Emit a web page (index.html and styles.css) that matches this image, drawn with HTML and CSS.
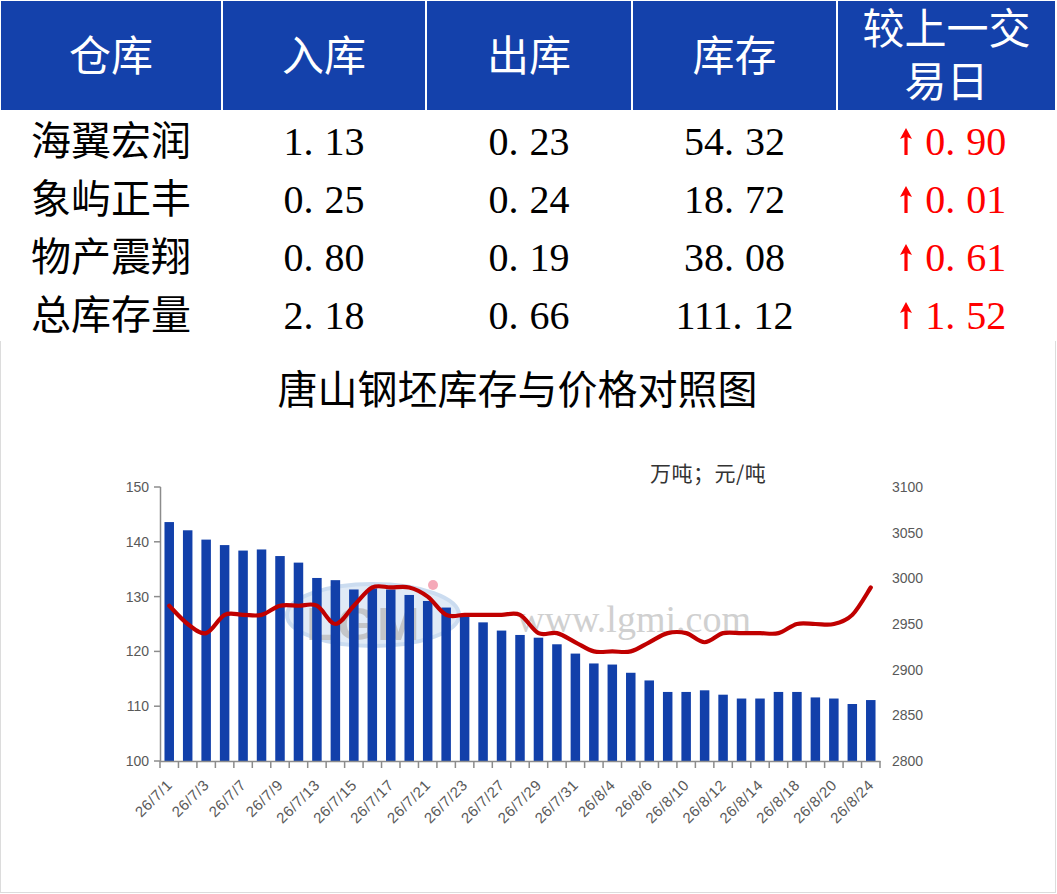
FILE: index.html
```html
<!DOCTYPE html>
<html lang="zh-CN">
<head>
<meta charset="utf-8">
<title>唐山钢坯库存</title>
<link rel="stylesheet" href="styles.css">
</head>
<body>
<div class="page">
  <div class="grid-row head">
    <div class="cell">仓库</div>
    <div class="cell">入库</div>
    <div class="cell">出库</div>
    <div class="cell">库存</div>
    <div class="cell">较上一交<br>易日</div>
  </div>
  <div class="tbody">
    <div class="grid-row brow">
      <div class="cell">海翼宏润</div>
      <div class="cell">1<span class="dot">.</span>13</div>
      <div class="cell">0<span class="dot">.</span>23</div>
      <div class="cell">54<span class="dot">.</span>32</div>
      <div class="cell chg"><svg class="arrow" width="12" height="27" viewBox="0 0 12 27"><path d="M6 0 L12 11 L7.6 9.2 L7.6 27 L4.4 27 L4.4 9.2 L0 11 Z"/></svg>0<span class="dot">.</span>90</div>
    </div>
    <div class="grid-row brow">
      <div class="cell">象屿正丰</div>
      <div class="cell">0<span class="dot">.</span>25</div>
      <div class="cell">0<span class="dot">.</span>24</div>
      <div class="cell">18<span class="dot">.</span>72</div>
      <div class="cell chg"><svg class="arrow" width="12" height="27" viewBox="0 0 12 27"><path d="M6 0 L12 11 L7.6 9.2 L7.6 27 L4.4 27 L4.4 9.2 L0 11 Z"/></svg>0<span class="dot">.</span>01</div>
    </div>
    <div class="grid-row brow">
      <div class="cell">物产震翔</div>
      <div class="cell">0<span class="dot">.</span>80</div>
      <div class="cell">0<span class="dot">.</span>19</div>
      <div class="cell">38<span class="dot">.</span>08</div>
      <div class="cell chg"><svg class="arrow" width="12" height="27" viewBox="0 0 12 27"><path d="M6 0 L12 11 L7.6 9.2 L7.6 27 L4.4 27 L4.4 9.2 L0 11 Z"/></svg>0<span class="dot">.</span>61</div>
    </div>
    <div class="grid-row brow">
      <div class="cell">总库存量</div>
      <div class="cell">2<span class="dot">.</span>18</div>
      <div class="cell">0<span class="dot">.</span>66</div>
      <div class="cell">111<span class="dot">.</span>12</div>
      <div class="cell chg"><svg class="arrow" width="12" height="27" viewBox="0 0 12 27"><path d="M6 0 L12 11 L7.6 9.2 L7.6 27 L4.4 27 L4.4 9.2 L0 11 Z"/></svg>1<span class="dot">.</span>52</div>
    </div>
  </div>
  <div class="chart">
    <div class="chart-title">唐山钢坯库存与价格对照图</div>
    <svg id="plot" class="plot" width="1054" height="481" viewBox="0 0 1054 481"></svg>
  </div>
</div>
<script src="chart.js"></script>
</body>
</html>
```

FILE: styles.css
```css
html, body {
  margin: 0;
  padding: 0;
  background: #fff;
}
body {
  width: 1057px;
  height: 894px;
  overflow: hidden;
  font-family: "Liberation Serif", "Noto Sans CJK SC", serif;
  color: #000;
}
.page {
  padding-top: 1px;
}
.grid-row {
  display: grid;
  grid-template-columns: 220px 202px 204px 203px 217px;
  column-gap: 2px;
  margin-left: 1px;
}
.head {
  height: 107px;
}
.head .cell {
  background: #1441ab;
  color: #fff;
  font-size: 42px;
  line-height: 53px;
  padding-top: 3px;
  box-sizing: border-box;
  display: flex;
  align-items: center;
  justify-content: center;
  text-align: center;
}
.tbody {
  height: 233px;
  padding-top: 4.5px;
  box-sizing: border-box;
}
.brow {
  height: 58.3px;
}
.brow .cell {
  font-size: 40px;
  line-height: 58.3px;
  text-align: center;
  white-space: nowrap;
}
.dot {
  margin-right: 11px;
}
.chg {
  color: #ff0000;
  padding-left: 13px;
}
.arrow {
  fill: #ff0000;
  vertical-align: baseline;
  margin-right: 13.5px;
}
.chart {
  width: 1054px;
  height: 551px;
  border-left: 1px solid #dcdcdc;
  border-right: 1px solid #dcdcdc;
  border-bottom: 1px solid #dcdcdc;
}
.chart-title {
  font-family: "Noto Sans CJK SC", sans-serif;
  font-size: 40px;
  line-height: 48px;
  padding-top: 22px;
  padding-right: 21px;
  text-align: center;
  color: #000;
}
.plot {
  display: block;
}
.ax {
  font-family: "Liberation Sans", Arial, sans-serif;
  font-size: 14px;
  fill: #595959;
}
.xl {
  font-size: 15px;
  letter-spacing: 0.6px;
}
.unit {
  font-family: "Noto Sans CJK SC", sans-serif;
  font-size: 21px;
  letter-spacing: 0.5px;
  fill: #333;
}
.wm {
  font-family: "Liberation Serif", serif;
  font-size: 38px;
  fill: #cbcbcb;
  opacity: 0.9;
}
.logo-t {
  font-family: "Liberation Sans", Arial, sans-serif;
  font-size: 46px;
  font-weight: bold;
  fill: #bdbdbd;
  opacity: 0.8;
}
```

FILE: chart.js
```js
(function () {
  var svg = document.getElementById('plot');
  var inv = [143.6,142.1,140.4,139.4,138.4,138.6,137.4,136.2,133.4,133.0,131.3,131.5,131.3,130.3,129.2,128.0,126.8,125.3,123.8,123.0,122.5,121.3,119.6,117.8,117.6,116.1,114.7,112.6,112.6,112.9,112.1,111.4,111.4,112.6,112.6,111.6,111.4,110.4,111.12];
  var price = [2970,2950,2940,2960,2960,2960,2970,2970,2970,2950,2970,2990,2990,2990,2980,2960,2960,2960,2960,2960,2940,2940,2930,2920,2920,2920,2930,2940,2940,2930,2940,2940,2940,2940,2950,2950,2950,2960,2990];
  var labels = ["26/7/1","26/7/3","26/7/7","26/7/9","26/7/13","26/7/15","26/7/17","26/7/21","26/7/23","26/7/27","26/7/29","26/7/31","26/8/4","26/8/6","26/8/10","26/8/12","26/8/14","26/8/18","26/8/20","26/8/24"];
  var x0 = 160, x1 = 880, n = inv.length, step = (x1 - x0) / n;
  var base = 761;
  function yInv(v) { return base - (v - 100) * 5.48; }
  function yP(p) { return base - (p - 2800) * 0.9133; }
  function f(v) { return v.toFixed(2); }
  var s = '<g transform="translate(-1,-411)">';

  // logo watermark (behind bars)
  s += '<ellipse cx="373" cy="615" rx="86" ry="31" fill="#dbe7f5" stroke="#c3d7ee" stroke-width="4" opacity="0.85"/>';
  s += '<text class="logo-t" x="306" y="640" textLength="128" lengthAdjust="spacingAndGlyphs">LGMi</text>';
  s += '<circle cx="433" cy="585" r="5" fill="#f5a9b8"/>';

  // watermark text
  s += '<text class="wm" x="517" y="632">www.lgmi.com</text>';

  // bars
  for (var i = 0; i < n; i++) {
    var cx = x0 + step * (i + 0.5);
    var y = yInv(inv[i]);
    s += '<rect x="' + f(cx - 4.75) + '" y="' + f(y) + '" width="9.5" height="' + f(base - y) + '" fill="#1240aa"/>';
  }

  // axes
  s += '<line x1="160.5" y1="487" x2="160.5" y2="761.5" stroke="#8c8c8c" stroke-width="1.5"/>';
  s += '<line x1="160" y1="761.5" x2="880.5" y2="761.5" stroke="#8c8c8c" stroke-width="1.5"/>';
  for (var v = 100; v <= 150; v += 10) {
    var yy = yInv(v);
    s += '<line x1="154" y1="' + f(yy) + '" x2="160.5" y2="' + f(yy) + '" stroke="#8c8c8c" stroke-width="1.5"/>';
    s += '<text class="ax" x="149" y="' + f(yy + 5) + '" text-anchor="end">' + v + '</text>';
  }
  for (var p = 2800; p <= 3100; p += 50) {
    s += '<text class="ax" x="892" y="' + f(yP(p) + 5) + '">' + p + '</text>';
  }
  for (var k = 0; k <= n; k++) {
    var tx = x0 + step * k;
    s += '<line x1="' + f(tx) + '" y1="761" x2="' + f(tx) + '" y2="768" stroke="#8c8c8c" stroke-width="1.5"/>';
  }
  for (var j = 0; j < labels.length; j++) {
    var lx = x0 + step * (j * 2 + 0.5) + 4;
    s += '<text class="ax xl" text-anchor="end" transform="translate(' + f(lx) + ',786) rotate(-45)">' + labels[j] + '</text>';
  }

  // unit label
  s += '<text class="unit" x="650" y="481">万吨；元/吨</text>';

  // smooth price line
  var pts = price.map(function (pv, i) { return [x0 + step * (i + 0.5), yP(pv)]; });
  var d = 'M' + f(pts[0][0]) + ',' + f(pts[0][1]);
  for (var m = 0; m < pts.length - 1; m++) {
    var p0 = pts[Math.max(m - 1, 0)], p1 = pts[m], p2 = pts[m + 1], p3 = pts[Math.min(m + 2, pts.length - 1)];
    var c1 = [p1[0] + (p2[0] - p0[0]) / 6, p1[1] + (p2[1] - p0[1]) / 6];
    var c2 = [p2[0] - (p3[0] - p1[0]) / 6, p2[1] - (p3[1] - p1[1]) / 6];
    d += ' C' + f(c1[0]) + ',' + f(c1[1]) + ' ' + f(c2[0]) + ',' + f(c2[1]) + ' ' + f(p2[0]) + ',' + f(p2[1]);
  }
  s += '<path d="' + d + '" fill="none" stroke="#c00000" stroke-width="4.2" stroke-linecap="round" stroke-linejoin="round"/>';

  s += '</g>';
  svg.innerHTML = s;
})();
```
